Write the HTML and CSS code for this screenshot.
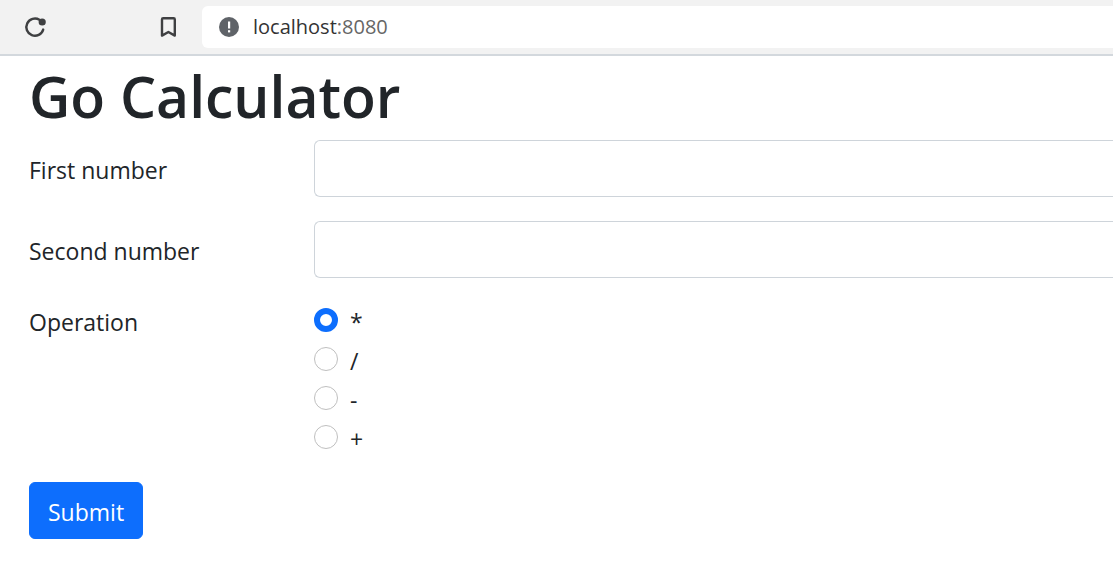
FILE: index.html
```html
<!DOCTYPE html>
<html lang="en">
<head>
  <title>Go Calculator</title>
  <meta charset="utf-8">
  <meta name="viewport" content="width=device-width, initial-scale=1">
  <link rel="stylesheet" href="styles.css">
</head>
<body>

  <!-- Browser bar -->
  <header class="toolbar">
    <button type="button" class="icon-button" aria-label="Reload">
      <svg width="24" height="24" viewBox="0 0 24 24" fill="none">
        <path d="M15.4 4.8A8.6 8.6 0 1 0 19.2 14.6" stroke="#3f4042" stroke-width="2.4" stroke-linecap="round"/>
        <circle cx="18.2" cy="7" r="3.6" fill="#3f4042"/>
      </svg>
    </button>
    <button type="button" class="icon-button" aria-label="Bookmark">
      <svg width="24" height="24" viewBox="0 0 24 24" fill="none">
        <path d="M6 4.4Q6 3.2 7.2 3.2H17.6Q18.8 3.2 18.8 4.4V20.6L12.4 17L6 20.6Z" stroke="#3f4042" stroke-width="2.4" stroke-linejoin="round"/>
      </svg>
    </button>
    <div class="address">
      <svg width="20" height="20" viewBox="0 0 20 20">
        <circle cx="10" cy="10" r="10" fill="#5f6368"/>
        <rect x="9" y="4.5" width="2.2" height="7" fill="#fff"/>
        <rect x="9" y="13.2" width="2.2" height="2.2" fill="#fff"/>
      </svg>
      <span class="host">localhost<span class="port">:8080</span></span>
    </div>
  </header>

  <main class="container">
    <h1>Go Calculator</h1>
    <form method="POST" action="/">
      <div class="row">
        <label class="col-label" for="first">First number</label>
        <input class="form-control" type="text" id="first" name="first">
      </div>
      <div class="row">
        <label class="col-label" for="second">Second number</label>
        <input class="form-control" type="text" id="second" name="second">
      </div>
      <div class="row row-top" role="radiogroup" aria-labelledby="operation">
        <span class="col-legend" id="operation">Operation</span>
        <div>
          <div class="form-check">
            <input type="radio" name="operation" id="mul" value="*" checked>
            <label for="mul">*</label>
          </div>
          <div class="form-check">
            <input type="radio" name="operation" id="div" value="/">
            <label for="div">/</label>
          </div>
          <div class="form-check">
            <input type="radio" name="operation" id="sub" value="-">
            <label for="sub">-</label>
          </div>
          <div class="form-check">
            <input type="radio" name="operation" id="add" value="+">
            <label for="add">+</label>
          </div>
        </div>
      </div>
      <button type="submit" class="btn">Submit</button>
    </form>
  </main>

</body>
</html>
```

FILE: styles.css
```css
* {
  box-sizing: border-box;
}

body {
  margin: 0;
  font-family: "Segoe UI", "Open Sans", "Noto Sans", sans-serif;
  font-size: 23px;
  line-height: 36px;
  color: #212529;
  background-color: #fff;
}

/* Browser bar */
.toolbar {
  display: flex;
  align-items: center;
  padding: 6px 0 6px 24px;
  background-color: #f2f2f2;
  border-bottom: 2px solid #d3d8dd;
}

.icon-button {
  display: flex;
  padding: 0;
  border: none;
  background: none;
  margin-right: 108px;
}

.icon-button + .icon-button {
  margin-right: 22px;
}

.address {
  flex: 1;
  display: flex;
  align-items: center;
  gap: 14px;
  height: 42px;
  padding-left: 17px;
  background-color: #fff;
  border-radius: 6px 0 0 6px;
}

.host {
  font-size: 20px;
  color: #333;
}

.port {
  color: #666;
}

/* Page content */
.container {
  padding: 4px 0 24px 29px;
}

h1 {
  margin: 0 0 8px;
  font-size: 57px;
  font-weight: 600;
  line-height: 72px;
}

/* Form rows */
.row {
  display: grid;
  grid-template-columns: 285px 1fr;
  align-items: center;
  margin-bottom: 24px;
}

.row-top {
  align-items: start;
}

.col-label {
  padding-top: 2px;
}

.col-legend {
  padding-top: 2px;
}

.form-control {
  width: 100%;
  height: 57px;
  padding: 9px 18px;
  font: inherit;
  color: #212529;
  background-color: #fff;
  border: 1px solid #ced4da;
  border-right: none;
  border-radius: 6px 0 0 6px;
}

/* Radio buttons */
.form-check {
  display: flex;
  align-items: center;
  gap: 12px;
  height: 36px;
  margin-bottom: 3px;
}

.form-check label {
  padding-top: 4px;
}

.form-check input {
  appearance: none;
  width: 24px;
  height: 24px;
  margin: 0;
  border: 1px solid #bfbfbf;
  border-radius: 50%;
  background-color: #fff;
}

.form-check input:checked {
  border: 6px solid #0d6efd;
}

.btn {
  height: 57px;
  padding: 2px 18px 0;
  font: inherit;
  color: #fff;
  background-color: #0d6efd;
  border: 1px solid #0d6efd;
  border-radius: 6px;
}
```
